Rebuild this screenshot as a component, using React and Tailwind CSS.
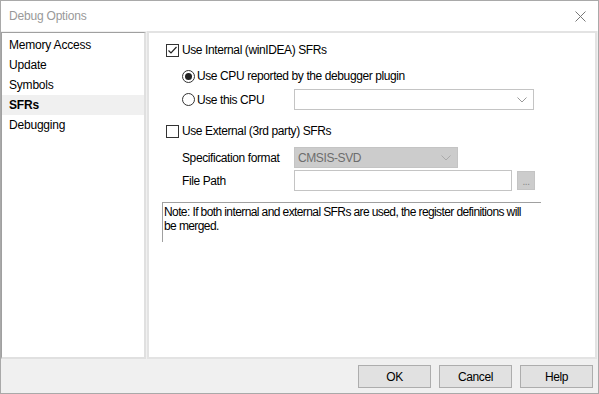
import React from "react";

const font = { fontFamily: '"Liberation Sans", Arial, sans-serif' };

function Chevron({ color = "#888" }) {
  return (
    <svg width="10" height="6" viewBox="0 0 10 6">
      <path d="M0.5 0.5 L5 5 L9.5 0.5" fill="none" stroke={color} strokeWidth="1" />
    </svg>
  );
}

function Checkbox({ checked }) {
  return (
    <div className="w-[13px] h-[13px] border border-[#333] bg-white flex items-center justify-center">
      {checked && (
        <svg width="11" height="11" viewBox="0 0 11 11">
          <path d="M1.5 5.5 L4 8 L9.5 2" fill="none" stroke="#222" strokeWidth="1.2" />
        </svg>
      )}
    </div>
  );
}

function Radio({ checked }) {
  return (
    <div className="w-[13px] h-[13px] rounded-full border border-[#333] bg-white flex items-center justify-center">
      {checked && <div className="w-[7px] h-[7px] rounded-full bg-[#222]" />}
    </div>
  );
}

export default function App() {
  const items = ["Memory Access", "Update", "Symbols", "SFRs", "Debugging"];

  return (
    <div style={font} className="w-[599px] h-[394px] bg-[#f0f0f0] border border-[#a9a9a9] flex flex-col text-[12px] tracking-[-0.4px] text-black overflow-hidden">
      {/* Title bar */}
      <div className="h-[30px] bg-white flex items-center justify-between pl-[8px] pr-[12px] shrink-0">
        <span className="text-[12px] text-[#999] tracking-[-0.2px]">Debug Options</span>
        <svg width="11" height="11" viewBox="0 0 11 11">
          <path d="M0.5 0.5 L10.5 10.5 M10.5 0.5 L0.5 10.5" stroke="#777" strokeWidth="1" />
        </svg>
      </div>

      <div className="flex h-[328px] gap-[1px] pr-[1px]">
        {/* Left list */}
        <div className="w-[145px] bg-white border-t border-l border-[#a0a0a0] border-r-2 border-b-2 border-r-[#e0e0e0] border-b-[#e0e0e0] mt-[1px] pt-[2px]">
          {items.map((it) => (
            <div
              key={it}
              className={
                "h-[20px] flex items-center pl-[7px] tracking-[-0.2px] " +
                (it === "SFRs" ? "bg-[#f0f0f0] font-bold" : "")
              }
            >
              {it}
            </div>
          ))}
        </div>

        {/* Right panel */}
        <div className="flex-1 bg-white border-2 border-[#e3e3e3] flex flex-col pl-[17px] pt-[9px]">
          <div className="h-[16px] flex items-center gap-[3px]">
            <Checkbox checked />
            <span>Use Internal (winIDEA) SFRs</span>
          </div>

          <div className="h-[16px] mt-[10px] pl-[16px] flex items-center gap-[2px]">
            <Radio checked />
            <span>Use CPU reported by the debugger plugin</span>
          </div>

          <div className="h-[21px] mt-[5px] pl-[16px] flex items-center">
            <div className="w-[112px] flex items-center gap-[2px]">
              <Radio />
              <span>Use this CPU</span>
            </div>
            <div className="w-[240px] h-[21px] border border-[#c4c4c4] bg-white flex items-center justify-end pr-[6px]">
              <Chevron color="#999" />
            </div>
          </div>

          <div className="h-[16px] mt-[13px] flex items-center gap-[3px]">
            <Checkbox />
            <span>Use External (3rd party) SFRs</span>
          </div>

          <div className="h-[21px] mt-[8px] pl-[16px] flex items-center">
            <span className="w-[112px]">Specification format</span>
            <div className="w-[164px] h-[21px] bg-[#cccccc] border border-[#c4c4c4] flex items-center justify-between pl-[3px] pr-[6px] text-[#6d6d6d]">
              <span>CMSIS-SVD</span>
              <Chevron color="#aaa" />
            </div>
          </div>

          <div className="h-[21px] mt-[2px] pl-[16px] flex items-center">
            <span className="w-[112px]">File Path</span>
            <div className="w-[218px] h-[21px] bg-white border border-[#c4c4c4]" />
            <div className="w-[18px] h-[19px] ml-[5px] bg-[#cccccc] border border-[#c4c4c4] flex items-end justify-center text-[#888] text-[10px] leading-[14px]">
              ...
            </div>
          </div>

          <div className="mt-[11px] -ml-[4px] w-[379px] h-[40px] border-t border-l border-[#a0a0a0] pl-[1px] pt-[2px] leading-[14px] whitespace-nowrap tracking-[-0.6px]">
            Note: If both internal and external SFRs are used, the register definitions will
            <br />
            be merged.
          </div>
        </div>
      </div>

      {/* Bottom buttons */}
      <div className="flex-1 flex items-start justify-end gap-[8px] pr-[5px] pt-[6px]">
        {["OK", "Cancel", "Help"].map((b) => (
          <button
            key={b}
            className="w-[73px] h-[23px] bg-[#e1e1e1] border border-[#adadad] text-[12px] flex items-center justify-center"
          >
            {b}
          </button>
        ))}
      </div>
    </div>
  );
}
